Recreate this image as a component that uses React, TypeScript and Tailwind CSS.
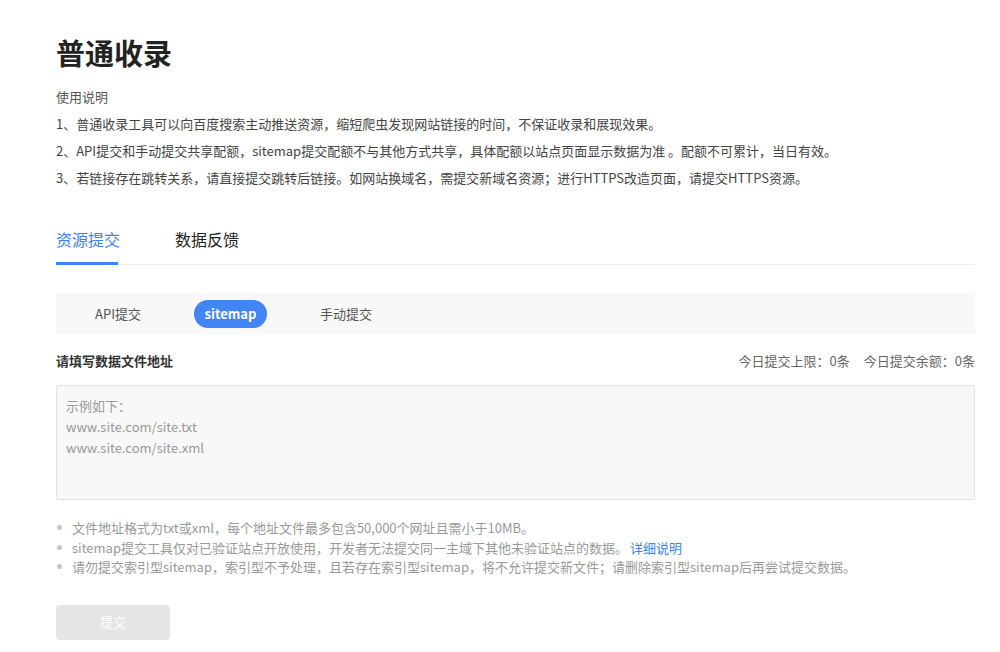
import React from "react"

const font = { fontFamily: '"Noto Sans CJK SC", "Noto Sans", sans-serif' }

const notes = [
  "1、普通收录工具可以向百度搜索主动推送资源，缩短爬虫发现网站链接的时间，不保证收录和展现效果。",
  "2、API提交和手动提交共享配额，sitemap提交配额不与其他方式共享，具体配额以站点页面显示数据为准 。配额不可累计，当日有效。",
  "3、若链接存在跳转关系，请直接提交跳转后链接。如网站换域名，需提交新域名资源；进行HTTPS改造页面，请提交HTTPS资源。",
]

const tips = [
  "文件地址格式为txt或xml，每个地址文件最多包含50,000个网址且需小于10MB。",
  "sitemap提交工具仅对已验证站点开放使用，开发者无法提交同一主域下其他未验证站点的数据。",
  "请勿提交索引型sitemap，索引型不予处理，且若存在索引型sitemap，将不允许提交新文件；请删除索引型sitemap后再尝试提交数据。",
]

export default function App() {
  return (
    <div className="min-h-[652px] bg-white text-[#333]" style={font}>
      <div className="pl-[56px] pr-[25px] pt-[34px]">
        <h1 className="text-[29px] font-bold leading-[36px] text-[#222]">普通收录</h1>

        <p className="mt-[18px] text-[13px] leading-[18px] text-[#555]">使用说明</p>
        <div className="mt-[4px] text-[13px] leading-[27px] text-[#444]">
          {notes.map((n) => (
            <p key={n}>{n}</p>
          ))}
        </div>

        {/* tabs */}
        <div className="mt-[36px] flex border-b border-[#eeeeee]">
          <div className="-mb-px w-[62px] whitespace-nowrap border-b-[3px] border-[#3e84f7] pb-[11px] text-[16px] leading-[24px] text-[#3e84f7]">
            资源提交
          </div>
          <div className="ml-[57px] whitespace-nowrap pb-[11px] text-[16px] leading-[24px] text-[#222]">数据反馈</div>
        </div>

        {/* sub tabs */}
        <div className="mt-[28px] flex h-[41px] items-center bg-[#f8f8f8] text-[13px]">
          <span className="ml-[39px] w-[47px] whitespace-nowrap text-[#555]">API提交</span>
          <span className="ml-[52px] flex h-[28px] w-[73px] items-center justify-center rounded-full bg-[#4285f4] text-[13px] font-bold text-white">
            sitemap
          </span>
          <span className="ml-[53px] text-[#555]">手动提交</span>
        </div>

        <div className="mt-[18px] flex items-center justify-between text-[13px] leading-[18px]">
          <span className="font-bold text-[#333]">请填写数据文件地址</span>
          <span className="text-[#666]">
            今日提交上限：0条<span className="ml-[14px]">今日提交余额：0条</span>
          </span>
        </div>

        <div className="mt-[15px] h-[115px] rounded-[2px] border border-[#e3e3e3] bg-[#f8f8f8] px-[9px] pt-[9px] text-[13px] leading-[21px] text-[#999]">
          <p>示例如下：</p>
          <p>www.site.com/site.txt</p>
          <p>www.site.com/site.xml</p>
        </div>

        <ul className="mt-[18px] text-[13px] leading-[19.5px] text-[#999]">
          {tips.map((t, i) => (
            <li key={t} className="flex items-center">
              <span className="mr-[10px] ml-[1px] h-[5px] w-[5px] shrink-0 rounded-full bg-[#c4c4c4]" />
              <span>
                {t}
                {i === 1 && <span className="ml-[2px] text-[#3e84f7]">详细说明</span>}
              </span>
            </li>
          ))}
        </ul>

        <button className="mt-[28px] h-[35px] w-[114px] rounded-[4px] bg-[#e5e5e5] text-[13px] text-white">
          提交
        </button>
      </div>
    </div>
  )
}
